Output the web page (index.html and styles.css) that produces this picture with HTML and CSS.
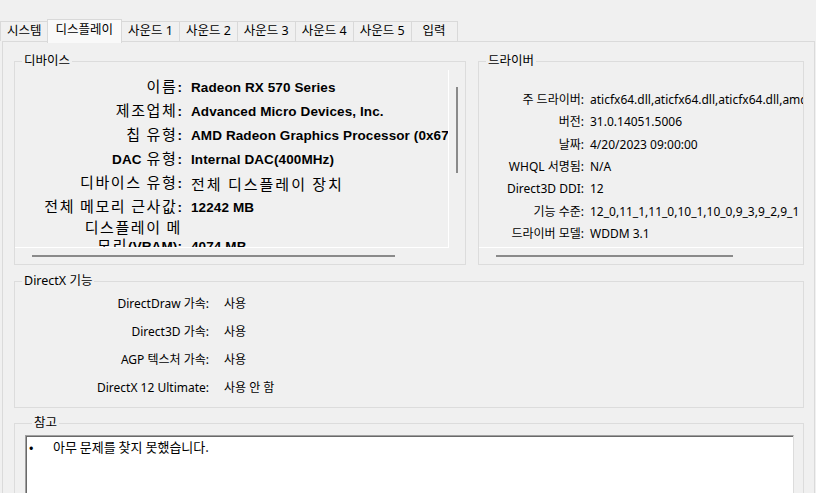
FILE: index.html
```html
<!DOCTYPE html>
<html>

<head>
    <meta charset="UTF-8">
    <title>DirectX 진단 도구</title>
    <link rel="stylesheet" href="styles.css">
</head>

<body>
    <div class="tabs">
        <div class="tab">시스템</div>
        <div class="tab active">디스플레이</div>
        <div class="tab">사운드 1</div>
        <div class="tab">사운드 2</div>
        <div class="tab">사운드 3</div>
        <div class="tab">사운드 4</div>
        <div class="tab">사운드 5</div>
        <div class="tab">입력</div>
    </div>

    <div class="page">
        <div class="top-row">
            <fieldset class="group device">
                <legend>디바이스</legend>
                <div class="scroll-box">
                    <div class="scroll-area dev-list">
                        <div class="dev-row"><span class="dev-label">이름<b>:</b></span><span class="dev-value">Radeon RX 570 Series</span></div>
                        <div class="dev-row"><span class="dev-label">제조업체<b>:</b></span><span class="dev-value">Advanced Micro Devices, Inc.</span></div>
                        <div class="dev-row"><span class="dev-label">칩 유형<b>:</b></span><span class="dev-value">AMD Radeon Graphics Processor (0x67DF)</span></div>
                        <div class="dev-row"><span class="dev-label"><b>DAC</b> 유형<b>:</b></span><span class="dev-value">Internal DAC(400MHz)</span></div>
                        <div class="dev-row"><span class="dev-label">디바이스 유형<b>:</b></span><span class="dev-value ko">전체 디스플레이 장치</span></div>
                        <div class="dev-row"><span class="dev-label">전체 메모리 근사값<b>:</b></span><span class="dev-value">12242 MB</span></div>
                        <div class="dev-row wrap"><span class="dev-label">디스플레이 메<br>모리<b>(VRAM):</b></span><span class="dev-value">4074 MB</span></div>
                    </div>
                    <div class="vbar"><div class="vthumb"></div></div>
                    <div class="hbar"><div class="hthumb dev-thumb"></div></div>
                </div>
            </fieldset>

            <fieldset class="group driver">
                <legend>드라이버</legend>
                <div class="scroll-box single">
                    <div class="scroll-area drv-list">
                        <div class="drv-row"><span class="drv-label">주 드라이버:</span><span class="drv-value">aticfx64.dll,aticfx64.dll,aticfx64.dll,amdxc64.dll</span></div>
                        <div class="drv-row"><span class="drv-label">버전:</span><span class="drv-value">31.0.14051.5006</span></div>
                        <div class="drv-row"><span class="drv-label">날짜:</span><span class="drv-value">4/20/2023 09:00:00</span></div>
                        <div class="drv-row"><span class="drv-label">WHQL 서명됨:</span><span class="drv-value">N/A</span></div>
                        <div class="drv-row"><span class="drv-label">Direct3D DDI:</span><span class="drv-value">12</span></div>
                        <div class="drv-row"><span class="drv-label">기능 수준:</span><span class="drv-value">12_0,11_1,11_0,10_1,10_0,9_3,9_2,9_1</span></div>
                        <div class="drv-row"><span class="drv-label">드라이버 모델:</span><span class="drv-value">WDDM 3.1</span></div>
                    </div>
                    <div class="hbar"><div class="hthumb drv-thumb"></div></div>
                </div>
            </fieldset>
        </div>

        <fieldset class="group features">
            <legend>DirectX 기능</legend>
            <div class="dx-row"><span class="dx-label">DirectDraw 가속:</span><span class="dx-value">사용</span></div>
            <div class="dx-row"><span class="dx-label">Direct3D 가속:</span><span class="dx-value">사용</span></div>
            <div class="dx-row"><span class="dx-label">AGP 텍스처 가속:</span><span class="dx-value">사용</span></div>
            <div class="dx-row"><span class="dx-label">DirectX 12 Ultimate:</span><span class="dx-value">사용 안 함</span></div>
        </fieldset>

        <fieldset class="group notes">
            <legend>참고</legend>
            <div class="note-box">
                <div class="note-line"><span class="bullet">•</span>아무 문제를 찾지 못했습니다.</div>
            </div>
        </fieldset>
    </div>
</body>

</html>
```

FILE: styles.css
```css
body {
    margin: 0;
    height: 493px;
    overflow: hidden;
    background-color: #f0f0f0;
    color: #000;
    font-family: "Noto Sans", "Noto Sans CJK KR", sans-serif;
    font-size: 12px;
}

/* 탭 */
.tabs {
    display: flex;
    align-items: flex-end;
    height: 41px;
}

.tab {
    height: 20px;
    min-width: 47px;
    padding: 0 6px;
    box-sizing: border-box;
    border: 1px solid #d9d9d9;
    border-bottom: none;
    margin-right: -1px;
    background-color: #f0f0f0;
    font-family: "Noto Sans", "Noto Sans CJK KR", sans-serif;
    font-size: 12.5px;
    line-height: 18px;
    text-align: center;
    white-space: nowrap;
}

.tab.active {
    position: relative;
    z-index: 1;
    height: 24px;
    margin: 0 -1px -2px -1px;
    padding: 0 8px;
    background-color: #f9f9f9;
    line-height: 19px;
}

/* 탭 페이지 */
.page {
    height: 460px;
    margin: 0 1px 0 2px;
    padding: 12px 10px 0 11px;
    border: 1px solid #dadada;
    background-color: #f0f0f0;
}

.group {
    margin: 0;
    padding: 0;
    min-width: 0;
    border: 1px solid #dcdcdc;
}

.group legend {
    margin-left: 7px;
    padding: 0 2px;
    font-family: "Noto Sans", "Noto Sans CJK KR", sans-serif;
    font-size: 12.5px;
    line-height: 14px;
}

.top-row {
    display: flex;
    gap: 12px;
}

.device {
    width: 452px;
    box-sizing: border-box;
    padding-top: 2px;
}

.driver {
    width: 326px;
    box-sizing: border-box;
}

.scroll-box {
    display: grid;
    grid-template-columns: 1fr 16px;
    grid-template-rows: 178px 16px;
}

.scroll-box.single {
    grid-template-columns: 1fr;
    grid-template-rows: 180px 16px;
}

.scroll-area {
    overflow: hidden;
    border-right: 1px solid #fff;
    border-bottom: 1px solid #fff;
}

.single .scroll-area {
    border-right: none;
}

.vthumb {
    width: 2px;
    height: 86px;
    margin: 17px 0 0 7px;
    background-color: #8a8a8a;
}

.hthumb {
    height: 2px;
    margin-top: 7px;
    background-color: #8a8a8a;
}

.dev-thumb {
    width: 363px;
    margin-left: 17px;
}

.drv-thumb {
    width: 237px;
    margin-left: 17px;
}

/* 디바이스 */
.dev-list {
    padding-top: 6px;
}

.dev-row {
    display: flex;
    align-items: flex-end;
    height: 24px;
    line-height: 24px;
    white-space: nowrap;
}

.dev-row.wrap {
    height: auto;
    margin-top: -2px;
    line-height: 18px;
}

.dev-label {
    flex: none;
    width: 167px;
    text-align: right;
    font-family: "Noto Sans CJK KR", sans-serif;
    font-size: 15px;
    letter-spacing: 1.6px;
}

.dev-label b,
.dev-value {
    font-family: "Liberation Sans", Arial, sans-serif;
    font-size: 13.5px;
    font-weight: bold;
    letter-spacing: 0.1px;
}

.dev-value {
    margin-left: 9px;
}

.dev-value.ko {
    font-family: "Noto Sans CJK KR", sans-serif;
    font-size: 15px;
    font-weight: normal;
    letter-spacing: 2px;
}

/* 드라이버 */
.drv-list {
    padding-top: 21px;
}

.drv-row {
    display: flex;
    height: 22.33px;
    line-height: 22px;
    white-space: nowrap;
}

.drv-label {
    flex: none;
    width: 105px;
    text-align: right;
}

.drv-value {
    margin-left: 6px;
}

/* DirectX 기능 */
.features {
    margin-top: 9px;
    padding: 2px 0 5px;
}

.dx-row {
    display: flex;
    height: 28px;
    line-height: 28px;
}

.dx-label {
    width: 194px;
    text-align: right;
}

.dx-value {
    margin-left: 15px;
}

/* 참고 */
.notes {
    margin-top: 8px;
    padding: 5px 9px 0 10px;
}

.note-box {
    height: 80px;
    background-color: #fff;
    border-top: 1px solid #a0a0a0;
    border-left: 1px solid #a0a0a0;
    border-right: 1px solid #dcdcdc;
    box-shadow: inset 1px 1px 0 #696969;
    padding: 2px 0 0 2px;
}

.note-line {
    display: flex;
    line-height: 18px;
    font-family: "Noto Sans CJK KR", sans-serif;
    font-size: 13px;
}

.bullet {
    width: 24px;
    padding-left: 1px;
}
```
